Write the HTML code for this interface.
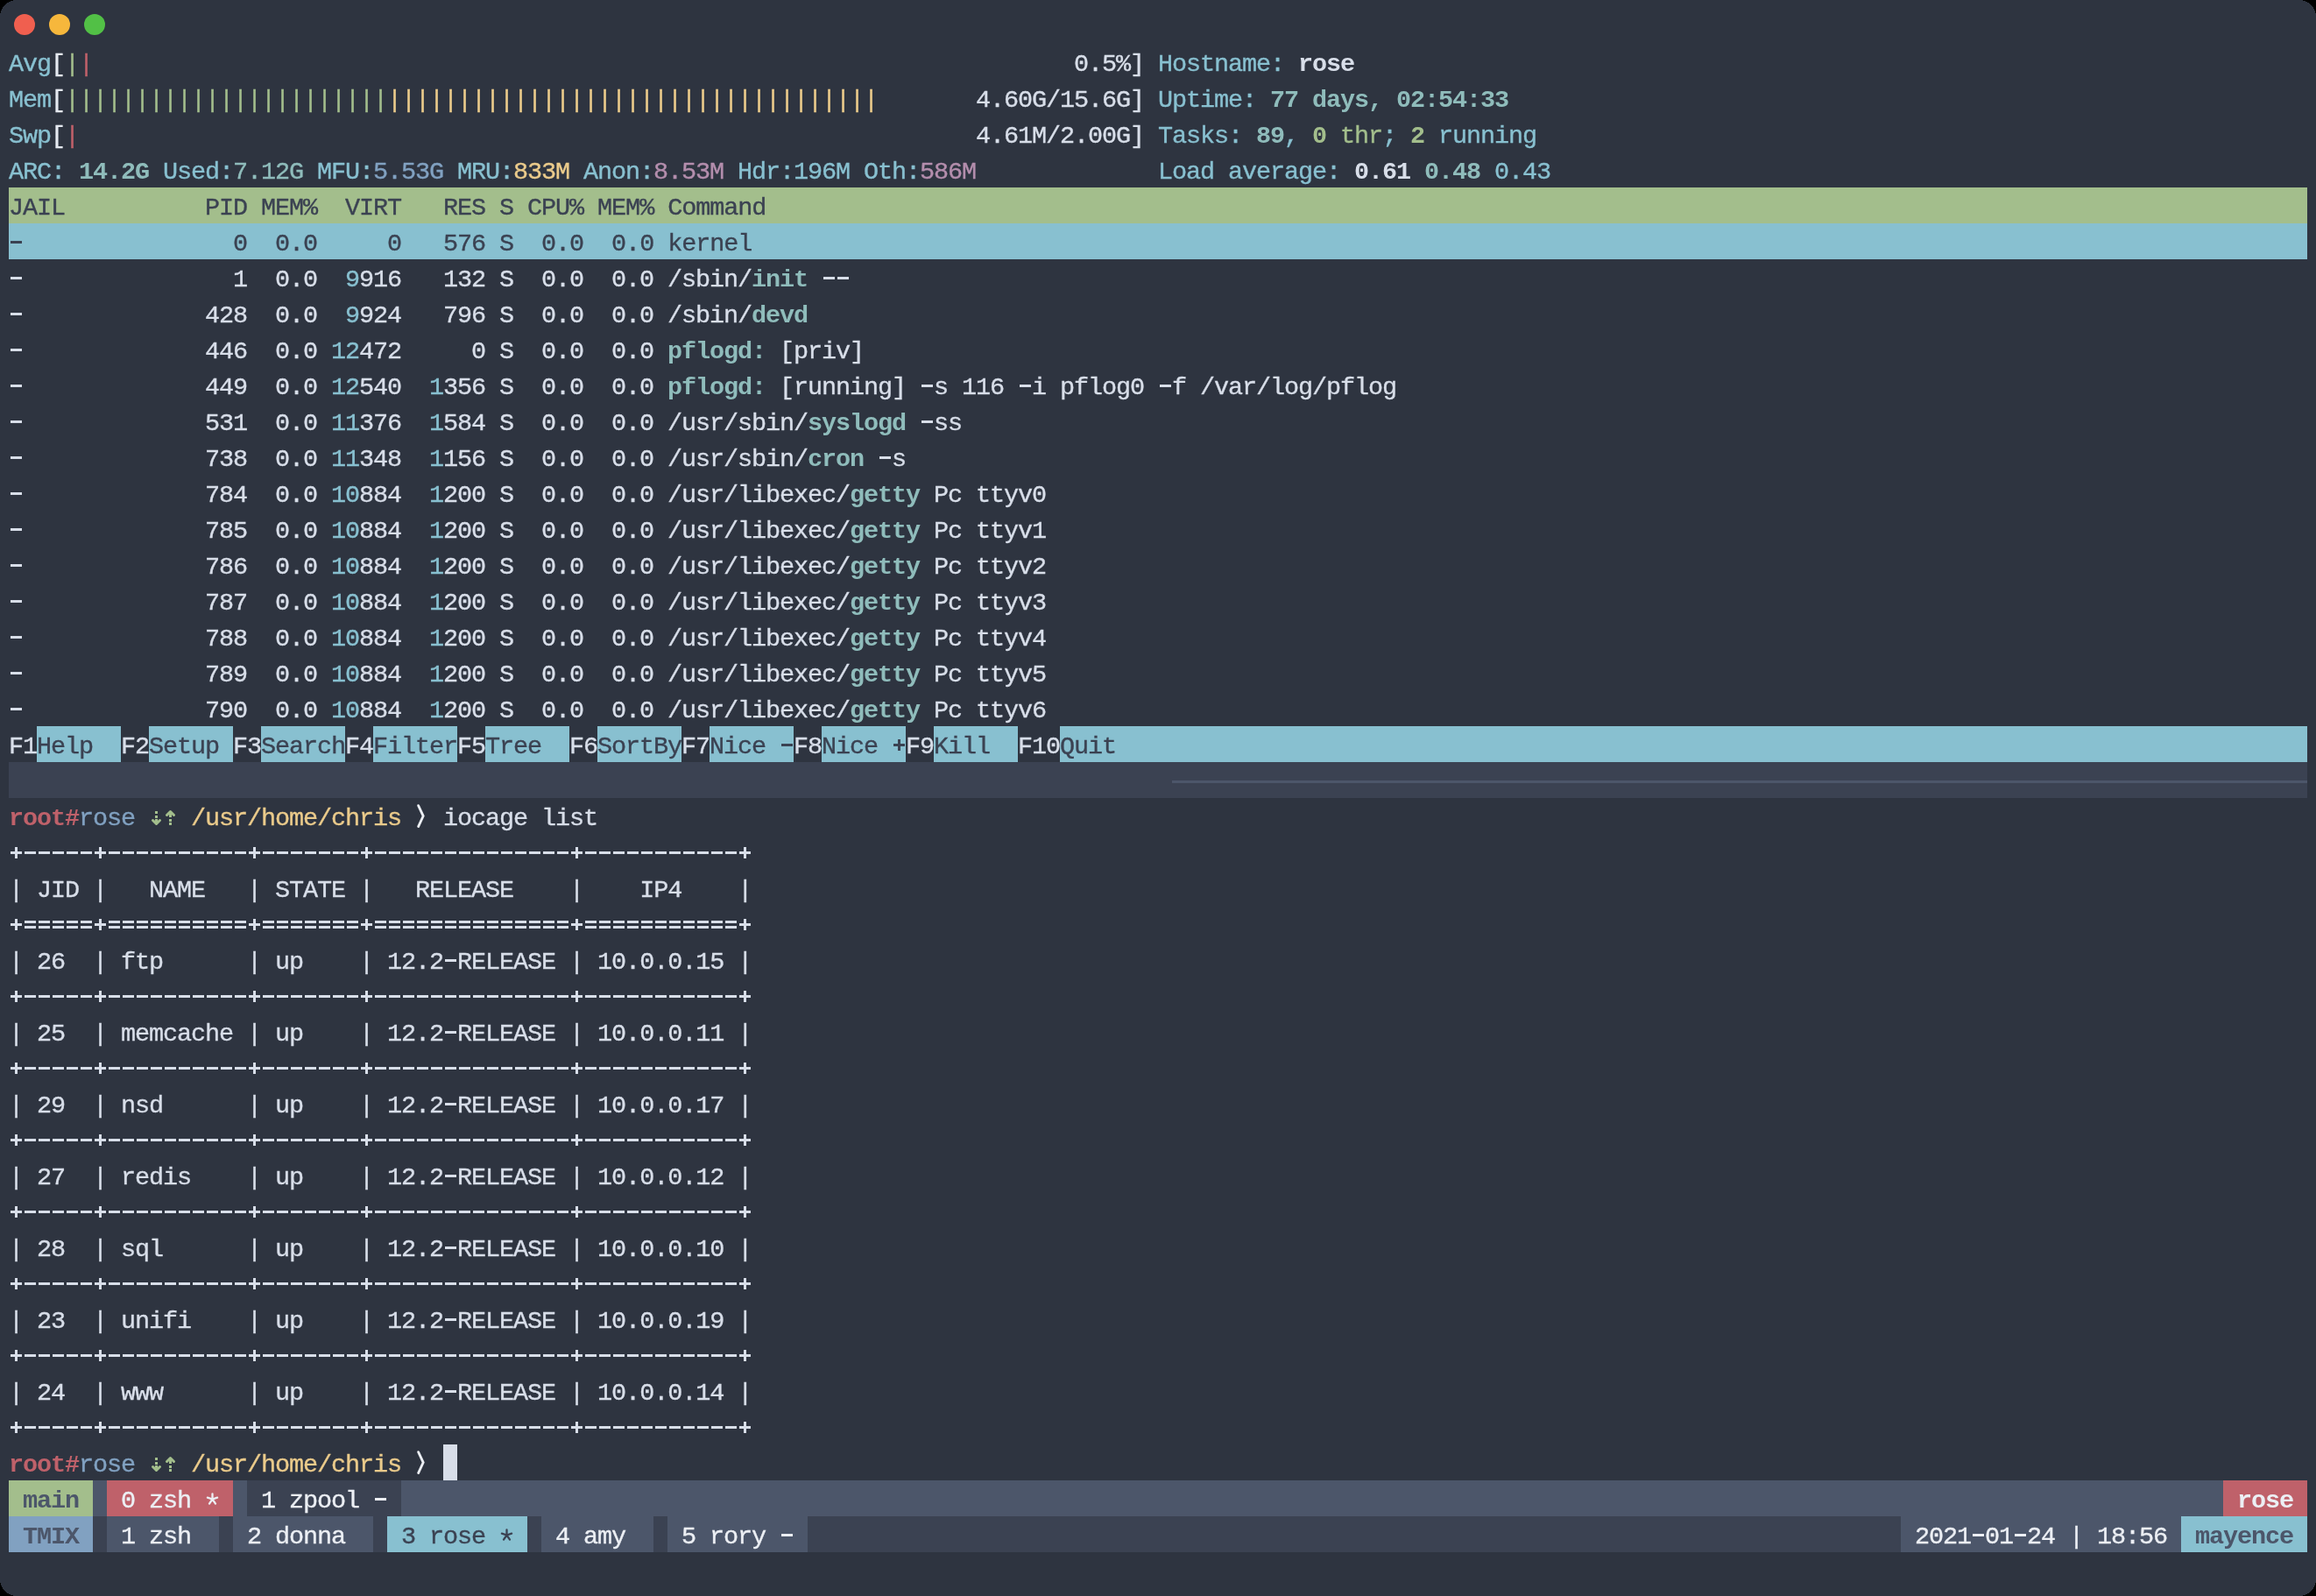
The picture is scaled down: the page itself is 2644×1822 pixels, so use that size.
<!DOCTYPE html>
<html><head><meta charset="utf-8"><style>
html,body{margin:0;padding:0;background:#000;}
body{width:2644px;height:1822px;overflow:hidden;position:relative;}
#win{position:absolute;left:0;top:0;width:2644px;height:1822px;background:#2E3440;overflow:hidden;}
.dot{position:absolute;top:16px;width:24px;height:24px;border-radius:50%;}
.bgr{position:absolute;height:41px;}
.row{will-change:transform;position:absolute;left:10px;height:41px;line-height:41px;white-space:pre;font-family:"Liberation Mono",monospace;font-size:28.5px;letter-spacing:-1.1px;color:#D8DEE9;}
.row span{position:absolute;top:0;-webkit-text-stroke:0.35px currentColor;}
.row i{position:absolute;display:block;}
b{font-weight:bold;}
</style></head><body><div id="win">
<svg style="position:absolute;left:0;top:0;z-index:5" width="2644" height="1822" shape-rendering="crispEdges"><g fill="#000">
<path d="M0 0 H19 A19 19 0 0 0 0 19 Z"/>
<path d="M2644 0 H2625 A19 19 0 0 1 2644 19 Z"/>
<path d="M0 1822 H19 A19 19 0 0 1 0 1803 Z"/>
<path d="M2644 1822 H2625 A19 19 0 0 0 2644 1803 Z"/>
</g></svg>
<div class="dot" style="left:16px;background:#F05F4F"></div>
<div class="dot" style="left:56px;background:#F6B73C"></div>
<div class="dot" style="left:96px;background:#52C046"></div>

<div class="bgr" style="left:10px;top:214px;width:2624px;background:#A3BE8C"></div>
<div class="bgr" style="left:10px;top:255px;width:2624px;background:#88C0D0"></div>
<div class="bgr" style="left:42px;top:829px;width:96px;background:#88C0D0"></div>
<div class="bgr" style="left:170px;top:829px;width:96px;background:#88C0D0"></div>
<div class="bgr" style="left:298px;top:829px;width:96px;background:#88C0D0"></div>
<div class="bgr" style="left:426px;top:829px;width:96px;background:#88C0D0"></div>
<div class="bgr" style="left:554px;top:829px;width:96px;background:#88C0D0"></div>
<div class="bgr" style="left:682px;top:829px;width:96px;background:#88C0D0"></div>
<div class="bgr" style="left:810px;top:829px;width:96px;background:#88C0D0"></div>
<div class="bgr" style="left:938px;top:829px;width:96px;background:#88C0D0"></div>
<div class="bgr" style="left:1066px;top:829px;width:96px;background:#88C0D0"></div>
<div class="bgr" style="left:1210px;top:829px;width:1424px;background:#88C0D0"></div>
<div class="bgr" style="left:10px;top:870px;width:2624px;background:#3B4252"></div>
<div class="bgr" style="left:10px;top:1690px;width:2624px;background:#4C566A"></div>
<div class="bgr" style="left:10px;top:1690px;width:96px;background:#A3BE8C"></div>
<div class="bgr" style="left:122px;top:1690px;width:144px;background:#BF616A"></div>
<div class="bgr" style="left:282px;top:1690px;width:176px;background:#3B4252"></div>
<div class="bgr" style="left:2538px;top:1690px;width:96px;background:#BF616A"></div>
<div class="bgr" style="left:10px;top:1731px;width:2624px;background:#3B4252"></div>
<div class="bgr" style="left:10px;top:1731px;width:96px;background:#81A1C1"></div>
<div class="bgr" style="left:122px;top:1731px;width:128px;background:#4C566A"></div>
<div class="bgr" style="left:266px;top:1731px;width:160px;background:#4C566A"></div>
<div class="bgr" style="left:442px;top:1731px;width:160px;background:#88C0D0"></div>
<div class="bgr" style="left:618px;top:1731px;width:128px;background:#4C566A"></div>
<div class="bgr" style="left:762px;top:1731px;width:160px;background:#4C566A"></div>
<div class="bgr" style="left:2170px;top:1731px;width:320px;background:#4C566A"></div>
<div class="bgr" style="left:2490px;top:1731px;width:144px;background:#88C0D0"></div>
<div style="position:absolute;left:1338px;top:891px;width:1296px;height:3px;background:#4C566A"></div>
<div style="position:absolute;left:506px;top:1649px;width:16px;height:41px;background:#D8DEE9"></div>
<div class="row" style="top:53px">
<span style="left:0px;color:#88C0D0">Avg</span>
<span style="left:48px;color:#E5E9F0">[</span>
<span style="left:64px;color:#A3BE8C">|</span>
<span style="left:80px;color:#BF616A">|</span>
<span style="left:1216px;color:#D8DEE9">0.5%]</span>
<span style="left:1312px;color:#88C0D0">Hostname: </span>
<span style="left:1472px;color:#D8DEE9;font-weight:bold;-webkit-text-stroke:0">rose</span>
</div>
<div class="row" style="top:94px">
<span style="left:0px;color:#88C0D0">Mem</span>
<span style="left:48px;color:#E5E9F0">[</span>
<span style="left:64px;color:#A3BE8C">|||||||||||||||||||||||</span>
<span style="left:432px;color:#EBCB8B">|||||||||||||||||||||||||||||||||||</span>
<span style="left:1104px;color:#D8DEE9">4.60G/15.6G]</span>
<span style="left:1312px;color:#88C0D0">Uptime: </span>
<span style="left:1440px;color:#8FBCBB;font-weight:bold;-webkit-text-stroke:0">77 days, 02:54:33</span>
</div>
<div class="row" style="top:135px">
<span style="left:0px;color:#88C0D0">Swp</span>
<span style="left:48px;color:#E5E9F0">[</span>
<span style="left:64px;color:#BF616A">|</span>
<span style="left:1104px;color:#D8DEE9">4.61M/2.00G]</span>
<span style="left:1312px;color:#88C0D0">Tasks: </span>
<span style="left:1424px;color:#8FBCBB;font-weight:bold;-webkit-text-stroke:0">89</span>
<span style="left:1456px;color:#88C0D0">, </span>
<span style="left:1488px;color:#A3BE8C;font-weight:bold;-webkit-text-stroke:0">0</span>
<span style="left:1504px;color:#A3BE8C"> thr</span>
<span style="left:1568px;color:#88C0D0">; </span>
<span style="left:1600px;color:#A3BE8C;font-weight:bold;-webkit-text-stroke:0">2</span>
<span style="left:1616px;color:#88C0D0"> running</span>
</div>
<div class="row" style="top:176px">
<span style="left:0px;color:#88C0D0">ARC: </span>
<span style="left:80px;color:#8FBCBB;font-weight:bold;-webkit-text-stroke:0">14.2G</span>
<span style="left:160px;color:#88C0D0"> Used:</span>
<span style="left:256px;color:#8FBCBB">7.12G</span>
<span style="left:336px;color:#88C0D0"> MFU:</span>
<span style="left:416px;color:#81A1C1">5.53G</span>
<span style="left:496px;color:#88C0D0"> MRU:</span>
<span style="left:576px;color:#EBCB8B">833M</span>
<span style="left:640px;color:#88C0D0"> Anon:</span>
<span style="left:736px;color:#B48EAD">8.53M</span>
<span style="left:816px;color:#88C0D0"> Hdr:</span>
<span style="left:896px;color:#88C0D0">196M</span>
<span style="left:960px;color:#88C0D0"> Oth:</span>
<span style="left:1040px;color:#B48EAD">586M</span>
<span style="left:1312px;color:#88C0D0">Load average: </span>
<span style="left:1536px;color:#D8DEE9;font-weight:bold;-webkit-text-stroke:0">0.61</span>
<span style="left:1616px;color:#8FBCBB;font-weight:bold;-webkit-text-stroke:0">0.48</span>
<span style="left:1680px;color:#88C0D0"> 0.43</span>
</div>
<div class="row" style="top:217px">
<span style="left:0px;color:#3B4252">JAIL          PID MEM%  VIRT   RES S CPU% MEM% Command</span>
</div>
<div class="row" style="top:258px">
<i style="left:2px;top:17px;width:13px;height:3px;background:#3B4252"></i>
<span style="left:0px;color:#3B4252">                0  0.0     0   576 S  0.0  0.0 kernel</span>
</div>
<div class="row" style="top:299px">
<i style="left:2px;top:17px;width:13px;height:3px;background:#D8DEE9"></i>
<span style="left:0px;color:#D8DEE9">                1  0.0 </span>
<span style="left:384px;color:#88C0D0">9</span>
<span style="left:400px;color:#D8DEE9">916</span>
<span style="left:464px;color:#D8DEE9">  132</span>
<span style="left:544px;color:#D8DEE9"> S  0.0  0.0 </span>
<span style="left:752px;color:#D8DEE9">/sbin/</span>
<span style="left:848px;color:#8FBCBB;font-weight:bold;-webkit-text-stroke:0">init</span>
<i style="left:930px;top:17px;width:13px;height:3px;background:#D8DEE9"></i>
<i style="left:946px;top:17px;width:13px;height:3px;background:#D8DEE9"></i>
</div>
<div class="row" style="top:340px">
<i style="left:2px;top:17px;width:13px;height:3px;background:#D8DEE9"></i>
<span style="left:0px;color:#D8DEE9">              428  0.0 </span>
<span style="left:384px;color:#88C0D0">9</span>
<span style="left:400px;color:#D8DEE9">924</span>
<span style="left:464px;color:#D8DEE9">  796</span>
<span style="left:544px;color:#D8DEE9"> S  0.0  0.0 </span>
<span style="left:752px;color:#D8DEE9">/sbin/</span>
<span style="left:848px;color:#8FBCBB;font-weight:bold;-webkit-text-stroke:0">devd</span>
</div>
<div class="row" style="top:381px">
<i style="left:2px;top:17px;width:13px;height:3px;background:#D8DEE9"></i>
<span style="left:0px;color:#D8DEE9">              446  0.0 </span>
<span style="left:368px;color:#88C0D0">12</span>
<span style="left:400px;color:#D8DEE9">472</span>
<span style="left:464px;color:#D8DEE9">    0</span>
<span style="left:544px;color:#D8DEE9"> S  0.0  0.0 </span>
<span style="left:752px;color:#8FBCBB;font-weight:bold;-webkit-text-stroke:0">pflogd:</span>
<span style="left:864px;color:#D8DEE9"> [priv]</span>
</div>
<div class="row" style="top:422px">
<i style="left:2px;top:17px;width:13px;height:3px;background:#D8DEE9"></i>
<span style="left:0px;color:#D8DEE9">              449  0.0 </span>
<span style="left:368px;color:#88C0D0">12</span>
<span style="left:400px;color:#D8DEE9">540</span>
<span style="left:480px;color:#88C0D0">1</span>
<span style="left:496px;color:#D8DEE9">356</span>
<span style="left:544px;color:#D8DEE9"> S  0.0  0.0 </span>
<span style="left:752px;color:#8FBCBB;font-weight:bold;-webkit-text-stroke:0">pflogd:</span>
<i style="left:1042px;top:17px;width:13px;height:3px;background:#D8DEE9"></i>
<i style="left:1154px;top:17px;width:13px;height:3px;background:#D8DEE9"></i>
<i style="left:1314px;top:17px;width:13px;height:3px;background:#D8DEE9"></i>
<span style="left:864px;color:#D8DEE9"> [running]  s 116  i pflog0  f /var/log/pflog</span>
</div>
<div class="row" style="top:463px">
<i style="left:2px;top:17px;width:13px;height:3px;background:#D8DEE9"></i>
<span style="left:0px;color:#D8DEE9">              531  0.0 </span>
<span style="left:368px;color:#88C0D0">11</span>
<span style="left:400px;color:#D8DEE9">376</span>
<span style="left:480px;color:#88C0D0">1</span>
<span style="left:496px;color:#D8DEE9">584</span>
<span style="left:544px;color:#D8DEE9"> S  0.0  0.0 </span>
<span style="left:752px;color:#D8DEE9">/usr/sbin/</span>
<span style="left:912px;color:#8FBCBB;font-weight:bold;-webkit-text-stroke:0">syslogd</span>
<i style="left:1042px;top:17px;width:13px;height:3px;background:#D8DEE9"></i>
<span style="left:1024px;color:#D8DEE9">  ss</span>
</div>
<div class="row" style="top:504px">
<i style="left:2px;top:17px;width:13px;height:3px;background:#D8DEE9"></i>
<span style="left:0px;color:#D8DEE9">              738  0.0 </span>
<span style="left:368px;color:#88C0D0">11</span>
<span style="left:400px;color:#D8DEE9">348</span>
<span style="left:480px;color:#88C0D0">1</span>
<span style="left:496px;color:#D8DEE9">156</span>
<span style="left:544px;color:#D8DEE9"> S  0.0  0.0 </span>
<span style="left:752px;color:#D8DEE9">/usr/sbin/</span>
<span style="left:912px;color:#8FBCBB;font-weight:bold;-webkit-text-stroke:0">cron</span>
<i style="left:994px;top:17px;width:13px;height:3px;background:#D8DEE9"></i>
<span style="left:976px;color:#D8DEE9">  s</span>
</div>
<div class="row" style="top:545px">
<i style="left:2px;top:17px;width:13px;height:3px;background:#D8DEE9"></i>
<span style="left:0px;color:#D8DEE9">              784  0.0 </span>
<span style="left:368px;color:#88C0D0">10</span>
<span style="left:400px;color:#D8DEE9">884</span>
<span style="left:480px;color:#88C0D0">1</span>
<span style="left:496px;color:#D8DEE9">200</span>
<span style="left:544px;color:#D8DEE9"> S  0.0  0.0 </span>
<span style="left:752px;color:#D8DEE9">/usr/libexec/</span>
<span style="left:960px;color:#8FBCBB;font-weight:bold;-webkit-text-stroke:0">getty</span>
<span style="left:1040px;color:#D8DEE9"> Pc ttyv0</span>
</div>
<div class="row" style="top:586px">
<i style="left:2px;top:17px;width:13px;height:3px;background:#D8DEE9"></i>
<span style="left:0px;color:#D8DEE9">              785  0.0 </span>
<span style="left:368px;color:#88C0D0">10</span>
<span style="left:400px;color:#D8DEE9">884</span>
<span style="left:480px;color:#88C0D0">1</span>
<span style="left:496px;color:#D8DEE9">200</span>
<span style="left:544px;color:#D8DEE9"> S  0.0  0.0 </span>
<span style="left:752px;color:#D8DEE9">/usr/libexec/</span>
<span style="left:960px;color:#8FBCBB;font-weight:bold;-webkit-text-stroke:0">getty</span>
<span style="left:1040px;color:#D8DEE9"> Pc ttyv1</span>
</div>
<div class="row" style="top:627px">
<i style="left:2px;top:17px;width:13px;height:3px;background:#D8DEE9"></i>
<span style="left:0px;color:#D8DEE9">              786  0.0 </span>
<span style="left:368px;color:#88C0D0">10</span>
<span style="left:400px;color:#D8DEE9">884</span>
<span style="left:480px;color:#88C0D0">1</span>
<span style="left:496px;color:#D8DEE9">200</span>
<span style="left:544px;color:#D8DEE9"> S  0.0  0.0 </span>
<span style="left:752px;color:#D8DEE9">/usr/libexec/</span>
<span style="left:960px;color:#8FBCBB;font-weight:bold;-webkit-text-stroke:0">getty</span>
<span style="left:1040px;color:#D8DEE9"> Pc ttyv2</span>
</div>
<div class="row" style="top:668px">
<i style="left:2px;top:17px;width:13px;height:3px;background:#D8DEE9"></i>
<span style="left:0px;color:#D8DEE9">              787  0.0 </span>
<span style="left:368px;color:#88C0D0">10</span>
<span style="left:400px;color:#D8DEE9">884</span>
<span style="left:480px;color:#88C0D0">1</span>
<span style="left:496px;color:#D8DEE9">200</span>
<span style="left:544px;color:#D8DEE9"> S  0.0  0.0 </span>
<span style="left:752px;color:#D8DEE9">/usr/libexec/</span>
<span style="left:960px;color:#8FBCBB;font-weight:bold;-webkit-text-stroke:0">getty</span>
<span style="left:1040px;color:#D8DEE9"> Pc ttyv3</span>
</div>
<div class="row" style="top:709px">
<i style="left:2px;top:17px;width:13px;height:3px;background:#D8DEE9"></i>
<span style="left:0px;color:#D8DEE9">              788  0.0 </span>
<span style="left:368px;color:#88C0D0">10</span>
<span style="left:400px;color:#D8DEE9">884</span>
<span style="left:480px;color:#88C0D0">1</span>
<span style="left:496px;color:#D8DEE9">200</span>
<span style="left:544px;color:#D8DEE9"> S  0.0  0.0 </span>
<span style="left:752px;color:#D8DEE9">/usr/libexec/</span>
<span style="left:960px;color:#8FBCBB;font-weight:bold;-webkit-text-stroke:0">getty</span>
<span style="left:1040px;color:#D8DEE9"> Pc ttyv4</span>
</div>
<div class="row" style="top:750px">
<i style="left:2px;top:17px;width:13px;height:3px;background:#D8DEE9"></i>
<span style="left:0px;color:#D8DEE9">              789  0.0 </span>
<span style="left:368px;color:#88C0D0">10</span>
<span style="left:400px;color:#D8DEE9">884</span>
<span style="left:480px;color:#88C0D0">1</span>
<span style="left:496px;color:#D8DEE9">200</span>
<span style="left:544px;color:#D8DEE9"> S  0.0  0.0 </span>
<span style="left:752px;color:#D8DEE9">/usr/libexec/</span>
<span style="left:960px;color:#8FBCBB;font-weight:bold;-webkit-text-stroke:0">getty</span>
<span style="left:1040px;color:#D8DEE9"> Pc ttyv5</span>
</div>
<div class="row" style="top:791px">
<i style="left:2px;top:17px;width:13px;height:3px;background:#D8DEE9"></i>
<span style="left:0px;color:#D8DEE9">              790  0.0 </span>
<span style="left:368px;color:#88C0D0">10</span>
<span style="left:400px;color:#D8DEE9">884</span>
<span style="left:480px;color:#88C0D0">1</span>
<span style="left:496px;color:#D8DEE9">200</span>
<span style="left:544px;color:#D8DEE9"> S  0.0  0.0 </span>
<span style="left:752px;color:#D8DEE9">/usr/libexec/</span>
<span style="left:960px;color:#8FBCBB;font-weight:bold;-webkit-text-stroke:0">getty</span>
<span style="left:1040px;color:#D8DEE9"> Pc ttyv6</span>
</div>
<div class="row" style="top:832px">
<span style="left:0px;color:#D8DEE9">F1</span>
<span style="left:32px;color:#3B4252">Help  </span>
<span style="left:128px;color:#D8DEE9">F2</span>
<span style="left:160px;color:#3B4252">Setup </span>
<span style="left:256px;color:#D8DEE9">F3</span>
<span style="left:288px;color:#3B4252">Search</span>
<span style="left:384px;color:#D8DEE9">F4</span>
<span style="left:416px;color:#3B4252">Filter</span>
<span style="left:512px;color:#D8DEE9">F5</span>
<span style="left:544px;color:#3B4252">Tree  </span>
<span style="left:640px;color:#D8DEE9">F6</span>
<span style="left:672px;color:#3B4252">SortBy</span>
<span style="left:768px;color:#D8DEE9">F7</span>
<i style="left:882px;top:17px;width:13px;height:3px;background:#3B4252"></i>
<span style="left:800px;color:#3B4252">Nice  </span>
<span style="left:896px;color:#D8DEE9">F8</span>
<i style="left:1010px;top:17px;width:13px;height:3px;background:#3B4252"></i>
<i style="left:1015px;top:12px;width:3px;height:13px;background:#3B4252"></i>
<span style="left:928px;color:#3B4252">Nice  </span>
<span style="left:1024px;color:#D8DEE9">F9</span>
<span style="left:1056px;color:#3B4252">Kill  </span>
<span style="left:1152px;color:#D8DEE9">F10</span>
<span style="left:1200px;color:#3B4252">Quit</span>
</div>
<div class="row" style="top:914px">
<span style="left:0px;color:#BF616A;font-weight:bold;-webkit-text-stroke:0">root#</span>
<span style="left:80px;color:#81A1C1">rose</span>
<span style="left:160px;top:-3px;width:32px;height:41px"><svg width="32" height="41" style="position:absolute;top:0;left:0" viewBox="0 0 32 41"><g fill="#A3BE8C"><rect x="7" y="15" width="3" height="3"/><rect x="7" y="20" width="3" height="3"/><rect x="7" y="24" width="3" height="5"/><rect x="23" y="17" width="3" height="5"/><rect x="23" y="24" width="3" height="3"/><rect x="23" y="28" width="3" height="3"/></g><g stroke="#A3BE8C" stroke-width="3" fill="none" stroke-linecap="round" stroke-linejoin="round"><path d="M4.5 25.5 L8.5 29.5 L12.5 25.5"/><path d="M20.5 19.5 L24.5 15.5 L28.5 19.5"/></g></svg></span>
<span style="left:208px;color:#EBCB8B">/usr/home/chris</span>
<span style="left:464px;top:-3px;width:16px;height:41px"><svg width="16" height="41" style="position:absolute;top:0;left:0" viewBox="0 0 16 41"><path d="M3.6 8.6 L9.2 20.6 L3.6 32.6" stroke="#ECEFF4" stroke-width="2.8" fill="none" stroke-linecap="round" stroke-linejoin="miter"/></svg></span>
<span style="left:496px;color:#D8DEE9">iocage list</span>
</div>
<div class="row" style="top:955px">
<i style="left:2px;top:17px;width:13px;height:3px;background:#D8DEE9"></i>
<i style="left:7px;top:12px;width:3px;height:13px;background:#D8DEE9"></i>
<i style="left:18px;top:17px;width:13px;height:3px;background:#D8DEE9"></i>
<i style="left:34px;top:17px;width:13px;height:3px;background:#D8DEE9"></i>
<i style="left:50px;top:17px;width:13px;height:3px;background:#D8DEE9"></i>
<i style="left:66px;top:17px;width:13px;height:3px;background:#D8DEE9"></i>
<i style="left:82px;top:17px;width:13px;height:3px;background:#D8DEE9"></i>
<i style="left:98px;top:17px;width:13px;height:3px;background:#D8DEE9"></i>
<i style="left:103px;top:12px;width:3px;height:13px;background:#D8DEE9"></i>
<i style="left:114px;top:17px;width:13px;height:3px;background:#D8DEE9"></i>
<i style="left:130px;top:17px;width:13px;height:3px;background:#D8DEE9"></i>
<i style="left:146px;top:17px;width:13px;height:3px;background:#D8DEE9"></i>
<i style="left:162px;top:17px;width:13px;height:3px;background:#D8DEE9"></i>
<i style="left:178px;top:17px;width:13px;height:3px;background:#D8DEE9"></i>
<i style="left:194px;top:17px;width:13px;height:3px;background:#D8DEE9"></i>
<i style="left:210px;top:17px;width:13px;height:3px;background:#D8DEE9"></i>
<i style="left:226px;top:17px;width:13px;height:3px;background:#D8DEE9"></i>
<i style="left:242px;top:17px;width:13px;height:3px;background:#D8DEE9"></i>
<i style="left:258px;top:17px;width:13px;height:3px;background:#D8DEE9"></i>
<i style="left:274px;top:17px;width:13px;height:3px;background:#D8DEE9"></i>
<i style="left:279px;top:12px;width:3px;height:13px;background:#D8DEE9"></i>
<i style="left:290px;top:17px;width:13px;height:3px;background:#D8DEE9"></i>
<i style="left:306px;top:17px;width:13px;height:3px;background:#D8DEE9"></i>
<i style="left:322px;top:17px;width:13px;height:3px;background:#D8DEE9"></i>
<i style="left:338px;top:17px;width:13px;height:3px;background:#D8DEE9"></i>
<i style="left:354px;top:17px;width:13px;height:3px;background:#D8DEE9"></i>
<i style="left:370px;top:17px;width:13px;height:3px;background:#D8DEE9"></i>
<i style="left:386px;top:17px;width:13px;height:3px;background:#D8DEE9"></i>
<i style="left:402px;top:17px;width:13px;height:3px;background:#D8DEE9"></i>
<i style="left:407px;top:12px;width:3px;height:13px;background:#D8DEE9"></i>
<i style="left:418px;top:17px;width:13px;height:3px;background:#D8DEE9"></i>
<i style="left:434px;top:17px;width:13px;height:3px;background:#D8DEE9"></i>
<i style="left:450px;top:17px;width:13px;height:3px;background:#D8DEE9"></i>
<i style="left:466px;top:17px;width:13px;height:3px;background:#D8DEE9"></i>
<i style="left:482px;top:17px;width:13px;height:3px;background:#D8DEE9"></i>
<i style="left:498px;top:17px;width:13px;height:3px;background:#D8DEE9"></i>
<i style="left:514px;top:17px;width:13px;height:3px;background:#D8DEE9"></i>
<i style="left:530px;top:17px;width:13px;height:3px;background:#D8DEE9"></i>
<i style="left:546px;top:17px;width:13px;height:3px;background:#D8DEE9"></i>
<i style="left:562px;top:17px;width:13px;height:3px;background:#D8DEE9"></i>
<i style="left:578px;top:17px;width:13px;height:3px;background:#D8DEE9"></i>
<i style="left:594px;top:17px;width:13px;height:3px;background:#D8DEE9"></i>
<i style="left:610px;top:17px;width:13px;height:3px;background:#D8DEE9"></i>
<i style="left:626px;top:17px;width:13px;height:3px;background:#D8DEE9"></i>
<i style="left:642px;top:17px;width:13px;height:3px;background:#D8DEE9"></i>
<i style="left:647px;top:12px;width:3px;height:13px;background:#D8DEE9"></i>
<i style="left:658px;top:17px;width:13px;height:3px;background:#D8DEE9"></i>
<i style="left:674px;top:17px;width:13px;height:3px;background:#D8DEE9"></i>
<i style="left:690px;top:17px;width:13px;height:3px;background:#D8DEE9"></i>
<i style="left:706px;top:17px;width:13px;height:3px;background:#D8DEE9"></i>
<i style="left:722px;top:17px;width:13px;height:3px;background:#D8DEE9"></i>
<i style="left:738px;top:17px;width:13px;height:3px;background:#D8DEE9"></i>
<i style="left:754px;top:17px;width:13px;height:3px;background:#D8DEE9"></i>
<i style="left:770px;top:17px;width:13px;height:3px;background:#D8DEE9"></i>
<i style="left:786px;top:17px;width:13px;height:3px;background:#D8DEE9"></i>
<i style="left:802px;top:17px;width:13px;height:3px;background:#D8DEE9"></i>
<i style="left:818px;top:17px;width:13px;height:3px;background:#D8DEE9"></i>
<i style="left:834px;top:17px;width:13px;height:3px;background:#D8DEE9"></i>
<i style="left:839px;top:12px;width:3px;height:13px;background:#D8DEE9"></i>
</div>
<div class="row" style="top:996px">
<span style="left:0px;color:#D8DEE9">| JID |   NAME   | STATE |   RELEASE    |    IP4    |</span>
</div>
<div class="row" style="top:1037px">
<i style="left:2px;top:17px;width:13px;height:3px;background:#D8DEE9"></i>
<i style="left:7px;top:12px;width:3px;height:13px;background:#D8DEE9"></i>
<i style="left:18px;top:14px;width:13px;height:3px;background:#D8DEE9"></i>
<i style="left:18px;top:20px;width:13px;height:3px;background:#D8DEE9"></i>
<i style="left:34px;top:14px;width:13px;height:3px;background:#D8DEE9"></i>
<i style="left:34px;top:20px;width:13px;height:3px;background:#D8DEE9"></i>
<i style="left:50px;top:14px;width:13px;height:3px;background:#D8DEE9"></i>
<i style="left:50px;top:20px;width:13px;height:3px;background:#D8DEE9"></i>
<i style="left:66px;top:14px;width:13px;height:3px;background:#D8DEE9"></i>
<i style="left:66px;top:20px;width:13px;height:3px;background:#D8DEE9"></i>
<i style="left:82px;top:14px;width:13px;height:3px;background:#D8DEE9"></i>
<i style="left:82px;top:20px;width:13px;height:3px;background:#D8DEE9"></i>
<i style="left:98px;top:17px;width:13px;height:3px;background:#D8DEE9"></i>
<i style="left:103px;top:12px;width:3px;height:13px;background:#D8DEE9"></i>
<i style="left:114px;top:14px;width:13px;height:3px;background:#D8DEE9"></i>
<i style="left:114px;top:20px;width:13px;height:3px;background:#D8DEE9"></i>
<i style="left:130px;top:14px;width:13px;height:3px;background:#D8DEE9"></i>
<i style="left:130px;top:20px;width:13px;height:3px;background:#D8DEE9"></i>
<i style="left:146px;top:14px;width:13px;height:3px;background:#D8DEE9"></i>
<i style="left:146px;top:20px;width:13px;height:3px;background:#D8DEE9"></i>
<i style="left:162px;top:14px;width:13px;height:3px;background:#D8DEE9"></i>
<i style="left:162px;top:20px;width:13px;height:3px;background:#D8DEE9"></i>
<i style="left:178px;top:14px;width:13px;height:3px;background:#D8DEE9"></i>
<i style="left:178px;top:20px;width:13px;height:3px;background:#D8DEE9"></i>
<i style="left:194px;top:14px;width:13px;height:3px;background:#D8DEE9"></i>
<i style="left:194px;top:20px;width:13px;height:3px;background:#D8DEE9"></i>
<i style="left:210px;top:14px;width:13px;height:3px;background:#D8DEE9"></i>
<i style="left:210px;top:20px;width:13px;height:3px;background:#D8DEE9"></i>
<i style="left:226px;top:14px;width:13px;height:3px;background:#D8DEE9"></i>
<i style="left:226px;top:20px;width:13px;height:3px;background:#D8DEE9"></i>
<i style="left:242px;top:14px;width:13px;height:3px;background:#D8DEE9"></i>
<i style="left:242px;top:20px;width:13px;height:3px;background:#D8DEE9"></i>
<i style="left:258px;top:14px;width:13px;height:3px;background:#D8DEE9"></i>
<i style="left:258px;top:20px;width:13px;height:3px;background:#D8DEE9"></i>
<i style="left:274px;top:17px;width:13px;height:3px;background:#D8DEE9"></i>
<i style="left:279px;top:12px;width:3px;height:13px;background:#D8DEE9"></i>
<i style="left:290px;top:14px;width:13px;height:3px;background:#D8DEE9"></i>
<i style="left:290px;top:20px;width:13px;height:3px;background:#D8DEE9"></i>
<i style="left:306px;top:14px;width:13px;height:3px;background:#D8DEE9"></i>
<i style="left:306px;top:20px;width:13px;height:3px;background:#D8DEE9"></i>
<i style="left:322px;top:14px;width:13px;height:3px;background:#D8DEE9"></i>
<i style="left:322px;top:20px;width:13px;height:3px;background:#D8DEE9"></i>
<i style="left:338px;top:14px;width:13px;height:3px;background:#D8DEE9"></i>
<i style="left:338px;top:20px;width:13px;height:3px;background:#D8DEE9"></i>
<i style="left:354px;top:14px;width:13px;height:3px;background:#D8DEE9"></i>
<i style="left:354px;top:20px;width:13px;height:3px;background:#D8DEE9"></i>
<i style="left:370px;top:14px;width:13px;height:3px;background:#D8DEE9"></i>
<i style="left:370px;top:20px;width:13px;height:3px;background:#D8DEE9"></i>
<i style="left:386px;top:14px;width:13px;height:3px;background:#D8DEE9"></i>
<i style="left:386px;top:20px;width:13px;height:3px;background:#D8DEE9"></i>
<i style="left:402px;top:17px;width:13px;height:3px;background:#D8DEE9"></i>
<i style="left:407px;top:12px;width:3px;height:13px;background:#D8DEE9"></i>
<i style="left:418px;top:14px;width:13px;height:3px;background:#D8DEE9"></i>
<i style="left:418px;top:20px;width:13px;height:3px;background:#D8DEE9"></i>
<i style="left:434px;top:14px;width:13px;height:3px;background:#D8DEE9"></i>
<i style="left:434px;top:20px;width:13px;height:3px;background:#D8DEE9"></i>
<i style="left:450px;top:14px;width:13px;height:3px;background:#D8DEE9"></i>
<i style="left:450px;top:20px;width:13px;height:3px;background:#D8DEE9"></i>
<i style="left:466px;top:14px;width:13px;height:3px;background:#D8DEE9"></i>
<i style="left:466px;top:20px;width:13px;height:3px;background:#D8DEE9"></i>
<i style="left:482px;top:14px;width:13px;height:3px;background:#D8DEE9"></i>
<i style="left:482px;top:20px;width:13px;height:3px;background:#D8DEE9"></i>
<i style="left:498px;top:14px;width:13px;height:3px;background:#D8DEE9"></i>
<i style="left:498px;top:20px;width:13px;height:3px;background:#D8DEE9"></i>
<i style="left:514px;top:14px;width:13px;height:3px;background:#D8DEE9"></i>
<i style="left:514px;top:20px;width:13px;height:3px;background:#D8DEE9"></i>
<i style="left:530px;top:14px;width:13px;height:3px;background:#D8DEE9"></i>
<i style="left:530px;top:20px;width:13px;height:3px;background:#D8DEE9"></i>
<i style="left:546px;top:14px;width:13px;height:3px;background:#D8DEE9"></i>
<i style="left:546px;top:20px;width:13px;height:3px;background:#D8DEE9"></i>
<i style="left:562px;top:14px;width:13px;height:3px;background:#D8DEE9"></i>
<i style="left:562px;top:20px;width:13px;height:3px;background:#D8DEE9"></i>
<i style="left:578px;top:14px;width:13px;height:3px;background:#D8DEE9"></i>
<i style="left:578px;top:20px;width:13px;height:3px;background:#D8DEE9"></i>
<i style="left:594px;top:14px;width:13px;height:3px;background:#D8DEE9"></i>
<i style="left:594px;top:20px;width:13px;height:3px;background:#D8DEE9"></i>
<i style="left:610px;top:14px;width:13px;height:3px;background:#D8DEE9"></i>
<i style="left:610px;top:20px;width:13px;height:3px;background:#D8DEE9"></i>
<i style="left:626px;top:14px;width:13px;height:3px;background:#D8DEE9"></i>
<i style="left:626px;top:20px;width:13px;height:3px;background:#D8DEE9"></i>
<i style="left:642px;top:17px;width:13px;height:3px;background:#D8DEE9"></i>
<i style="left:647px;top:12px;width:3px;height:13px;background:#D8DEE9"></i>
<i style="left:658px;top:14px;width:13px;height:3px;background:#D8DEE9"></i>
<i style="left:658px;top:20px;width:13px;height:3px;background:#D8DEE9"></i>
<i style="left:674px;top:14px;width:13px;height:3px;background:#D8DEE9"></i>
<i style="left:674px;top:20px;width:13px;height:3px;background:#D8DEE9"></i>
<i style="left:690px;top:14px;width:13px;height:3px;background:#D8DEE9"></i>
<i style="left:690px;top:20px;width:13px;height:3px;background:#D8DEE9"></i>
<i style="left:706px;top:14px;width:13px;height:3px;background:#D8DEE9"></i>
<i style="left:706px;top:20px;width:13px;height:3px;background:#D8DEE9"></i>
<i style="left:722px;top:14px;width:13px;height:3px;background:#D8DEE9"></i>
<i style="left:722px;top:20px;width:13px;height:3px;background:#D8DEE9"></i>
<i style="left:738px;top:14px;width:13px;height:3px;background:#D8DEE9"></i>
<i style="left:738px;top:20px;width:13px;height:3px;background:#D8DEE9"></i>
<i style="left:754px;top:14px;width:13px;height:3px;background:#D8DEE9"></i>
<i style="left:754px;top:20px;width:13px;height:3px;background:#D8DEE9"></i>
<i style="left:770px;top:14px;width:13px;height:3px;background:#D8DEE9"></i>
<i style="left:770px;top:20px;width:13px;height:3px;background:#D8DEE9"></i>
<i style="left:786px;top:14px;width:13px;height:3px;background:#D8DEE9"></i>
<i style="left:786px;top:20px;width:13px;height:3px;background:#D8DEE9"></i>
<i style="left:802px;top:14px;width:13px;height:3px;background:#D8DEE9"></i>
<i style="left:802px;top:20px;width:13px;height:3px;background:#D8DEE9"></i>
<i style="left:818px;top:14px;width:13px;height:3px;background:#D8DEE9"></i>
<i style="left:818px;top:20px;width:13px;height:3px;background:#D8DEE9"></i>
<i style="left:834px;top:17px;width:13px;height:3px;background:#D8DEE9"></i>
<i style="left:839px;top:12px;width:3px;height:13px;background:#D8DEE9"></i>
</div>
<div class="row" style="top:1078px">
<i style="left:498px;top:17px;width:13px;height:3px;background:#D8DEE9"></i>
<span style="left:0px;color:#D8DEE9">| 26  | ftp      | up    | 12.2 RELEASE | 10.0.0.15 |</span>
</div>
<div class="row" style="top:1119px">
<i style="left:2px;top:17px;width:13px;height:3px;background:#D8DEE9"></i>
<i style="left:7px;top:12px;width:3px;height:13px;background:#D8DEE9"></i>
<i style="left:18px;top:17px;width:13px;height:3px;background:#D8DEE9"></i>
<i style="left:34px;top:17px;width:13px;height:3px;background:#D8DEE9"></i>
<i style="left:50px;top:17px;width:13px;height:3px;background:#D8DEE9"></i>
<i style="left:66px;top:17px;width:13px;height:3px;background:#D8DEE9"></i>
<i style="left:82px;top:17px;width:13px;height:3px;background:#D8DEE9"></i>
<i style="left:98px;top:17px;width:13px;height:3px;background:#D8DEE9"></i>
<i style="left:103px;top:12px;width:3px;height:13px;background:#D8DEE9"></i>
<i style="left:114px;top:17px;width:13px;height:3px;background:#D8DEE9"></i>
<i style="left:130px;top:17px;width:13px;height:3px;background:#D8DEE9"></i>
<i style="left:146px;top:17px;width:13px;height:3px;background:#D8DEE9"></i>
<i style="left:162px;top:17px;width:13px;height:3px;background:#D8DEE9"></i>
<i style="left:178px;top:17px;width:13px;height:3px;background:#D8DEE9"></i>
<i style="left:194px;top:17px;width:13px;height:3px;background:#D8DEE9"></i>
<i style="left:210px;top:17px;width:13px;height:3px;background:#D8DEE9"></i>
<i style="left:226px;top:17px;width:13px;height:3px;background:#D8DEE9"></i>
<i style="left:242px;top:17px;width:13px;height:3px;background:#D8DEE9"></i>
<i style="left:258px;top:17px;width:13px;height:3px;background:#D8DEE9"></i>
<i style="left:274px;top:17px;width:13px;height:3px;background:#D8DEE9"></i>
<i style="left:279px;top:12px;width:3px;height:13px;background:#D8DEE9"></i>
<i style="left:290px;top:17px;width:13px;height:3px;background:#D8DEE9"></i>
<i style="left:306px;top:17px;width:13px;height:3px;background:#D8DEE9"></i>
<i style="left:322px;top:17px;width:13px;height:3px;background:#D8DEE9"></i>
<i style="left:338px;top:17px;width:13px;height:3px;background:#D8DEE9"></i>
<i style="left:354px;top:17px;width:13px;height:3px;background:#D8DEE9"></i>
<i style="left:370px;top:17px;width:13px;height:3px;background:#D8DEE9"></i>
<i style="left:386px;top:17px;width:13px;height:3px;background:#D8DEE9"></i>
<i style="left:402px;top:17px;width:13px;height:3px;background:#D8DEE9"></i>
<i style="left:407px;top:12px;width:3px;height:13px;background:#D8DEE9"></i>
<i style="left:418px;top:17px;width:13px;height:3px;background:#D8DEE9"></i>
<i style="left:434px;top:17px;width:13px;height:3px;background:#D8DEE9"></i>
<i style="left:450px;top:17px;width:13px;height:3px;background:#D8DEE9"></i>
<i style="left:466px;top:17px;width:13px;height:3px;background:#D8DEE9"></i>
<i style="left:482px;top:17px;width:13px;height:3px;background:#D8DEE9"></i>
<i style="left:498px;top:17px;width:13px;height:3px;background:#D8DEE9"></i>
<i style="left:514px;top:17px;width:13px;height:3px;background:#D8DEE9"></i>
<i style="left:530px;top:17px;width:13px;height:3px;background:#D8DEE9"></i>
<i style="left:546px;top:17px;width:13px;height:3px;background:#D8DEE9"></i>
<i style="left:562px;top:17px;width:13px;height:3px;background:#D8DEE9"></i>
<i style="left:578px;top:17px;width:13px;height:3px;background:#D8DEE9"></i>
<i style="left:594px;top:17px;width:13px;height:3px;background:#D8DEE9"></i>
<i style="left:610px;top:17px;width:13px;height:3px;background:#D8DEE9"></i>
<i style="left:626px;top:17px;width:13px;height:3px;background:#D8DEE9"></i>
<i style="left:642px;top:17px;width:13px;height:3px;background:#D8DEE9"></i>
<i style="left:647px;top:12px;width:3px;height:13px;background:#D8DEE9"></i>
<i style="left:658px;top:17px;width:13px;height:3px;background:#D8DEE9"></i>
<i style="left:674px;top:17px;width:13px;height:3px;background:#D8DEE9"></i>
<i style="left:690px;top:17px;width:13px;height:3px;background:#D8DEE9"></i>
<i style="left:706px;top:17px;width:13px;height:3px;background:#D8DEE9"></i>
<i style="left:722px;top:17px;width:13px;height:3px;background:#D8DEE9"></i>
<i style="left:738px;top:17px;width:13px;height:3px;background:#D8DEE9"></i>
<i style="left:754px;top:17px;width:13px;height:3px;background:#D8DEE9"></i>
<i style="left:770px;top:17px;width:13px;height:3px;background:#D8DEE9"></i>
<i style="left:786px;top:17px;width:13px;height:3px;background:#D8DEE9"></i>
<i style="left:802px;top:17px;width:13px;height:3px;background:#D8DEE9"></i>
<i style="left:818px;top:17px;width:13px;height:3px;background:#D8DEE9"></i>
<i style="left:834px;top:17px;width:13px;height:3px;background:#D8DEE9"></i>
<i style="left:839px;top:12px;width:3px;height:13px;background:#D8DEE9"></i>
</div>
<div class="row" style="top:1160px">
<i style="left:498px;top:17px;width:13px;height:3px;background:#D8DEE9"></i>
<span style="left:0px;color:#D8DEE9">| 25  | memcache | up    | 12.2 RELEASE | 10.0.0.11 |</span>
</div>
<div class="row" style="top:1201px">
<i style="left:2px;top:17px;width:13px;height:3px;background:#D8DEE9"></i>
<i style="left:7px;top:12px;width:3px;height:13px;background:#D8DEE9"></i>
<i style="left:18px;top:17px;width:13px;height:3px;background:#D8DEE9"></i>
<i style="left:34px;top:17px;width:13px;height:3px;background:#D8DEE9"></i>
<i style="left:50px;top:17px;width:13px;height:3px;background:#D8DEE9"></i>
<i style="left:66px;top:17px;width:13px;height:3px;background:#D8DEE9"></i>
<i style="left:82px;top:17px;width:13px;height:3px;background:#D8DEE9"></i>
<i style="left:98px;top:17px;width:13px;height:3px;background:#D8DEE9"></i>
<i style="left:103px;top:12px;width:3px;height:13px;background:#D8DEE9"></i>
<i style="left:114px;top:17px;width:13px;height:3px;background:#D8DEE9"></i>
<i style="left:130px;top:17px;width:13px;height:3px;background:#D8DEE9"></i>
<i style="left:146px;top:17px;width:13px;height:3px;background:#D8DEE9"></i>
<i style="left:162px;top:17px;width:13px;height:3px;background:#D8DEE9"></i>
<i style="left:178px;top:17px;width:13px;height:3px;background:#D8DEE9"></i>
<i style="left:194px;top:17px;width:13px;height:3px;background:#D8DEE9"></i>
<i style="left:210px;top:17px;width:13px;height:3px;background:#D8DEE9"></i>
<i style="left:226px;top:17px;width:13px;height:3px;background:#D8DEE9"></i>
<i style="left:242px;top:17px;width:13px;height:3px;background:#D8DEE9"></i>
<i style="left:258px;top:17px;width:13px;height:3px;background:#D8DEE9"></i>
<i style="left:274px;top:17px;width:13px;height:3px;background:#D8DEE9"></i>
<i style="left:279px;top:12px;width:3px;height:13px;background:#D8DEE9"></i>
<i style="left:290px;top:17px;width:13px;height:3px;background:#D8DEE9"></i>
<i style="left:306px;top:17px;width:13px;height:3px;background:#D8DEE9"></i>
<i style="left:322px;top:17px;width:13px;height:3px;background:#D8DEE9"></i>
<i style="left:338px;top:17px;width:13px;height:3px;background:#D8DEE9"></i>
<i style="left:354px;top:17px;width:13px;height:3px;background:#D8DEE9"></i>
<i style="left:370px;top:17px;width:13px;height:3px;background:#D8DEE9"></i>
<i style="left:386px;top:17px;width:13px;height:3px;background:#D8DEE9"></i>
<i style="left:402px;top:17px;width:13px;height:3px;background:#D8DEE9"></i>
<i style="left:407px;top:12px;width:3px;height:13px;background:#D8DEE9"></i>
<i style="left:418px;top:17px;width:13px;height:3px;background:#D8DEE9"></i>
<i style="left:434px;top:17px;width:13px;height:3px;background:#D8DEE9"></i>
<i style="left:450px;top:17px;width:13px;height:3px;background:#D8DEE9"></i>
<i style="left:466px;top:17px;width:13px;height:3px;background:#D8DEE9"></i>
<i style="left:482px;top:17px;width:13px;height:3px;background:#D8DEE9"></i>
<i style="left:498px;top:17px;width:13px;height:3px;background:#D8DEE9"></i>
<i style="left:514px;top:17px;width:13px;height:3px;background:#D8DEE9"></i>
<i style="left:530px;top:17px;width:13px;height:3px;background:#D8DEE9"></i>
<i style="left:546px;top:17px;width:13px;height:3px;background:#D8DEE9"></i>
<i style="left:562px;top:17px;width:13px;height:3px;background:#D8DEE9"></i>
<i style="left:578px;top:17px;width:13px;height:3px;background:#D8DEE9"></i>
<i style="left:594px;top:17px;width:13px;height:3px;background:#D8DEE9"></i>
<i style="left:610px;top:17px;width:13px;height:3px;background:#D8DEE9"></i>
<i style="left:626px;top:17px;width:13px;height:3px;background:#D8DEE9"></i>
<i style="left:642px;top:17px;width:13px;height:3px;background:#D8DEE9"></i>
<i style="left:647px;top:12px;width:3px;height:13px;background:#D8DEE9"></i>
<i style="left:658px;top:17px;width:13px;height:3px;background:#D8DEE9"></i>
<i style="left:674px;top:17px;width:13px;height:3px;background:#D8DEE9"></i>
<i style="left:690px;top:17px;width:13px;height:3px;background:#D8DEE9"></i>
<i style="left:706px;top:17px;width:13px;height:3px;background:#D8DEE9"></i>
<i style="left:722px;top:17px;width:13px;height:3px;background:#D8DEE9"></i>
<i style="left:738px;top:17px;width:13px;height:3px;background:#D8DEE9"></i>
<i style="left:754px;top:17px;width:13px;height:3px;background:#D8DEE9"></i>
<i style="left:770px;top:17px;width:13px;height:3px;background:#D8DEE9"></i>
<i style="left:786px;top:17px;width:13px;height:3px;background:#D8DEE9"></i>
<i style="left:802px;top:17px;width:13px;height:3px;background:#D8DEE9"></i>
<i style="left:818px;top:17px;width:13px;height:3px;background:#D8DEE9"></i>
<i style="left:834px;top:17px;width:13px;height:3px;background:#D8DEE9"></i>
<i style="left:839px;top:12px;width:3px;height:13px;background:#D8DEE9"></i>
</div>
<div class="row" style="top:1242px">
<i style="left:498px;top:17px;width:13px;height:3px;background:#D8DEE9"></i>
<span style="left:0px;color:#D8DEE9">| 29  | nsd      | up    | 12.2 RELEASE | 10.0.0.17 |</span>
</div>
<div class="row" style="top:1283px">
<i style="left:2px;top:17px;width:13px;height:3px;background:#D8DEE9"></i>
<i style="left:7px;top:12px;width:3px;height:13px;background:#D8DEE9"></i>
<i style="left:18px;top:17px;width:13px;height:3px;background:#D8DEE9"></i>
<i style="left:34px;top:17px;width:13px;height:3px;background:#D8DEE9"></i>
<i style="left:50px;top:17px;width:13px;height:3px;background:#D8DEE9"></i>
<i style="left:66px;top:17px;width:13px;height:3px;background:#D8DEE9"></i>
<i style="left:82px;top:17px;width:13px;height:3px;background:#D8DEE9"></i>
<i style="left:98px;top:17px;width:13px;height:3px;background:#D8DEE9"></i>
<i style="left:103px;top:12px;width:3px;height:13px;background:#D8DEE9"></i>
<i style="left:114px;top:17px;width:13px;height:3px;background:#D8DEE9"></i>
<i style="left:130px;top:17px;width:13px;height:3px;background:#D8DEE9"></i>
<i style="left:146px;top:17px;width:13px;height:3px;background:#D8DEE9"></i>
<i style="left:162px;top:17px;width:13px;height:3px;background:#D8DEE9"></i>
<i style="left:178px;top:17px;width:13px;height:3px;background:#D8DEE9"></i>
<i style="left:194px;top:17px;width:13px;height:3px;background:#D8DEE9"></i>
<i style="left:210px;top:17px;width:13px;height:3px;background:#D8DEE9"></i>
<i style="left:226px;top:17px;width:13px;height:3px;background:#D8DEE9"></i>
<i style="left:242px;top:17px;width:13px;height:3px;background:#D8DEE9"></i>
<i style="left:258px;top:17px;width:13px;height:3px;background:#D8DEE9"></i>
<i style="left:274px;top:17px;width:13px;height:3px;background:#D8DEE9"></i>
<i style="left:279px;top:12px;width:3px;height:13px;background:#D8DEE9"></i>
<i style="left:290px;top:17px;width:13px;height:3px;background:#D8DEE9"></i>
<i style="left:306px;top:17px;width:13px;height:3px;background:#D8DEE9"></i>
<i style="left:322px;top:17px;width:13px;height:3px;background:#D8DEE9"></i>
<i style="left:338px;top:17px;width:13px;height:3px;background:#D8DEE9"></i>
<i style="left:354px;top:17px;width:13px;height:3px;background:#D8DEE9"></i>
<i style="left:370px;top:17px;width:13px;height:3px;background:#D8DEE9"></i>
<i style="left:386px;top:17px;width:13px;height:3px;background:#D8DEE9"></i>
<i style="left:402px;top:17px;width:13px;height:3px;background:#D8DEE9"></i>
<i style="left:407px;top:12px;width:3px;height:13px;background:#D8DEE9"></i>
<i style="left:418px;top:17px;width:13px;height:3px;background:#D8DEE9"></i>
<i style="left:434px;top:17px;width:13px;height:3px;background:#D8DEE9"></i>
<i style="left:450px;top:17px;width:13px;height:3px;background:#D8DEE9"></i>
<i style="left:466px;top:17px;width:13px;height:3px;background:#D8DEE9"></i>
<i style="left:482px;top:17px;width:13px;height:3px;background:#D8DEE9"></i>
<i style="left:498px;top:17px;width:13px;height:3px;background:#D8DEE9"></i>
<i style="left:514px;top:17px;width:13px;height:3px;background:#D8DEE9"></i>
<i style="left:530px;top:17px;width:13px;height:3px;background:#D8DEE9"></i>
<i style="left:546px;top:17px;width:13px;height:3px;background:#D8DEE9"></i>
<i style="left:562px;top:17px;width:13px;height:3px;background:#D8DEE9"></i>
<i style="left:578px;top:17px;width:13px;height:3px;background:#D8DEE9"></i>
<i style="left:594px;top:17px;width:13px;height:3px;background:#D8DEE9"></i>
<i style="left:610px;top:17px;width:13px;height:3px;background:#D8DEE9"></i>
<i style="left:626px;top:17px;width:13px;height:3px;background:#D8DEE9"></i>
<i style="left:642px;top:17px;width:13px;height:3px;background:#D8DEE9"></i>
<i style="left:647px;top:12px;width:3px;height:13px;background:#D8DEE9"></i>
<i style="left:658px;top:17px;width:13px;height:3px;background:#D8DEE9"></i>
<i style="left:674px;top:17px;width:13px;height:3px;background:#D8DEE9"></i>
<i style="left:690px;top:17px;width:13px;height:3px;background:#D8DEE9"></i>
<i style="left:706px;top:17px;width:13px;height:3px;background:#D8DEE9"></i>
<i style="left:722px;top:17px;width:13px;height:3px;background:#D8DEE9"></i>
<i style="left:738px;top:17px;width:13px;height:3px;background:#D8DEE9"></i>
<i style="left:754px;top:17px;width:13px;height:3px;background:#D8DEE9"></i>
<i style="left:770px;top:17px;width:13px;height:3px;background:#D8DEE9"></i>
<i style="left:786px;top:17px;width:13px;height:3px;background:#D8DEE9"></i>
<i style="left:802px;top:17px;width:13px;height:3px;background:#D8DEE9"></i>
<i style="left:818px;top:17px;width:13px;height:3px;background:#D8DEE9"></i>
<i style="left:834px;top:17px;width:13px;height:3px;background:#D8DEE9"></i>
<i style="left:839px;top:12px;width:3px;height:13px;background:#D8DEE9"></i>
</div>
<div class="row" style="top:1324px">
<i style="left:498px;top:17px;width:13px;height:3px;background:#D8DEE9"></i>
<span style="left:0px;color:#D8DEE9">| 27  | redis    | up    | 12.2 RELEASE | 10.0.0.12 |</span>
</div>
<div class="row" style="top:1365px">
<i style="left:2px;top:17px;width:13px;height:3px;background:#D8DEE9"></i>
<i style="left:7px;top:12px;width:3px;height:13px;background:#D8DEE9"></i>
<i style="left:18px;top:17px;width:13px;height:3px;background:#D8DEE9"></i>
<i style="left:34px;top:17px;width:13px;height:3px;background:#D8DEE9"></i>
<i style="left:50px;top:17px;width:13px;height:3px;background:#D8DEE9"></i>
<i style="left:66px;top:17px;width:13px;height:3px;background:#D8DEE9"></i>
<i style="left:82px;top:17px;width:13px;height:3px;background:#D8DEE9"></i>
<i style="left:98px;top:17px;width:13px;height:3px;background:#D8DEE9"></i>
<i style="left:103px;top:12px;width:3px;height:13px;background:#D8DEE9"></i>
<i style="left:114px;top:17px;width:13px;height:3px;background:#D8DEE9"></i>
<i style="left:130px;top:17px;width:13px;height:3px;background:#D8DEE9"></i>
<i style="left:146px;top:17px;width:13px;height:3px;background:#D8DEE9"></i>
<i style="left:162px;top:17px;width:13px;height:3px;background:#D8DEE9"></i>
<i style="left:178px;top:17px;width:13px;height:3px;background:#D8DEE9"></i>
<i style="left:194px;top:17px;width:13px;height:3px;background:#D8DEE9"></i>
<i style="left:210px;top:17px;width:13px;height:3px;background:#D8DEE9"></i>
<i style="left:226px;top:17px;width:13px;height:3px;background:#D8DEE9"></i>
<i style="left:242px;top:17px;width:13px;height:3px;background:#D8DEE9"></i>
<i style="left:258px;top:17px;width:13px;height:3px;background:#D8DEE9"></i>
<i style="left:274px;top:17px;width:13px;height:3px;background:#D8DEE9"></i>
<i style="left:279px;top:12px;width:3px;height:13px;background:#D8DEE9"></i>
<i style="left:290px;top:17px;width:13px;height:3px;background:#D8DEE9"></i>
<i style="left:306px;top:17px;width:13px;height:3px;background:#D8DEE9"></i>
<i style="left:322px;top:17px;width:13px;height:3px;background:#D8DEE9"></i>
<i style="left:338px;top:17px;width:13px;height:3px;background:#D8DEE9"></i>
<i style="left:354px;top:17px;width:13px;height:3px;background:#D8DEE9"></i>
<i style="left:370px;top:17px;width:13px;height:3px;background:#D8DEE9"></i>
<i style="left:386px;top:17px;width:13px;height:3px;background:#D8DEE9"></i>
<i style="left:402px;top:17px;width:13px;height:3px;background:#D8DEE9"></i>
<i style="left:407px;top:12px;width:3px;height:13px;background:#D8DEE9"></i>
<i style="left:418px;top:17px;width:13px;height:3px;background:#D8DEE9"></i>
<i style="left:434px;top:17px;width:13px;height:3px;background:#D8DEE9"></i>
<i style="left:450px;top:17px;width:13px;height:3px;background:#D8DEE9"></i>
<i style="left:466px;top:17px;width:13px;height:3px;background:#D8DEE9"></i>
<i style="left:482px;top:17px;width:13px;height:3px;background:#D8DEE9"></i>
<i style="left:498px;top:17px;width:13px;height:3px;background:#D8DEE9"></i>
<i style="left:514px;top:17px;width:13px;height:3px;background:#D8DEE9"></i>
<i style="left:530px;top:17px;width:13px;height:3px;background:#D8DEE9"></i>
<i style="left:546px;top:17px;width:13px;height:3px;background:#D8DEE9"></i>
<i style="left:562px;top:17px;width:13px;height:3px;background:#D8DEE9"></i>
<i style="left:578px;top:17px;width:13px;height:3px;background:#D8DEE9"></i>
<i style="left:594px;top:17px;width:13px;height:3px;background:#D8DEE9"></i>
<i style="left:610px;top:17px;width:13px;height:3px;background:#D8DEE9"></i>
<i style="left:626px;top:17px;width:13px;height:3px;background:#D8DEE9"></i>
<i style="left:642px;top:17px;width:13px;height:3px;background:#D8DEE9"></i>
<i style="left:647px;top:12px;width:3px;height:13px;background:#D8DEE9"></i>
<i style="left:658px;top:17px;width:13px;height:3px;background:#D8DEE9"></i>
<i style="left:674px;top:17px;width:13px;height:3px;background:#D8DEE9"></i>
<i style="left:690px;top:17px;width:13px;height:3px;background:#D8DEE9"></i>
<i style="left:706px;top:17px;width:13px;height:3px;background:#D8DEE9"></i>
<i style="left:722px;top:17px;width:13px;height:3px;background:#D8DEE9"></i>
<i style="left:738px;top:17px;width:13px;height:3px;background:#D8DEE9"></i>
<i style="left:754px;top:17px;width:13px;height:3px;background:#D8DEE9"></i>
<i style="left:770px;top:17px;width:13px;height:3px;background:#D8DEE9"></i>
<i style="left:786px;top:17px;width:13px;height:3px;background:#D8DEE9"></i>
<i style="left:802px;top:17px;width:13px;height:3px;background:#D8DEE9"></i>
<i style="left:818px;top:17px;width:13px;height:3px;background:#D8DEE9"></i>
<i style="left:834px;top:17px;width:13px;height:3px;background:#D8DEE9"></i>
<i style="left:839px;top:12px;width:3px;height:13px;background:#D8DEE9"></i>
</div>
<div class="row" style="top:1406px">
<i style="left:498px;top:17px;width:13px;height:3px;background:#D8DEE9"></i>
<span style="left:0px;color:#D8DEE9">| 28  | sql      | up    | 12.2 RELEASE | 10.0.0.10 |</span>
</div>
<div class="row" style="top:1447px">
<i style="left:2px;top:17px;width:13px;height:3px;background:#D8DEE9"></i>
<i style="left:7px;top:12px;width:3px;height:13px;background:#D8DEE9"></i>
<i style="left:18px;top:17px;width:13px;height:3px;background:#D8DEE9"></i>
<i style="left:34px;top:17px;width:13px;height:3px;background:#D8DEE9"></i>
<i style="left:50px;top:17px;width:13px;height:3px;background:#D8DEE9"></i>
<i style="left:66px;top:17px;width:13px;height:3px;background:#D8DEE9"></i>
<i style="left:82px;top:17px;width:13px;height:3px;background:#D8DEE9"></i>
<i style="left:98px;top:17px;width:13px;height:3px;background:#D8DEE9"></i>
<i style="left:103px;top:12px;width:3px;height:13px;background:#D8DEE9"></i>
<i style="left:114px;top:17px;width:13px;height:3px;background:#D8DEE9"></i>
<i style="left:130px;top:17px;width:13px;height:3px;background:#D8DEE9"></i>
<i style="left:146px;top:17px;width:13px;height:3px;background:#D8DEE9"></i>
<i style="left:162px;top:17px;width:13px;height:3px;background:#D8DEE9"></i>
<i style="left:178px;top:17px;width:13px;height:3px;background:#D8DEE9"></i>
<i style="left:194px;top:17px;width:13px;height:3px;background:#D8DEE9"></i>
<i style="left:210px;top:17px;width:13px;height:3px;background:#D8DEE9"></i>
<i style="left:226px;top:17px;width:13px;height:3px;background:#D8DEE9"></i>
<i style="left:242px;top:17px;width:13px;height:3px;background:#D8DEE9"></i>
<i style="left:258px;top:17px;width:13px;height:3px;background:#D8DEE9"></i>
<i style="left:274px;top:17px;width:13px;height:3px;background:#D8DEE9"></i>
<i style="left:279px;top:12px;width:3px;height:13px;background:#D8DEE9"></i>
<i style="left:290px;top:17px;width:13px;height:3px;background:#D8DEE9"></i>
<i style="left:306px;top:17px;width:13px;height:3px;background:#D8DEE9"></i>
<i style="left:322px;top:17px;width:13px;height:3px;background:#D8DEE9"></i>
<i style="left:338px;top:17px;width:13px;height:3px;background:#D8DEE9"></i>
<i style="left:354px;top:17px;width:13px;height:3px;background:#D8DEE9"></i>
<i style="left:370px;top:17px;width:13px;height:3px;background:#D8DEE9"></i>
<i style="left:386px;top:17px;width:13px;height:3px;background:#D8DEE9"></i>
<i style="left:402px;top:17px;width:13px;height:3px;background:#D8DEE9"></i>
<i style="left:407px;top:12px;width:3px;height:13px;background:#D8DEE9"></i>
<i style="left:418px;top:17px;width:13px;height:3px;background:#D8DEE9"></i>
<i style="left:434px;top:17px;width:13px;height:3px;background:#D8DEE9"></i>
<i style="left:450px;top:17px;width:13px;height:3px;background:#D8DEE9"></i>
<i style="left:466px;top:17px;width:13px;height:3px;background:#D8DEE9"></i>
<i style="left:482px;top:17px;width:13px;height:3px;background:#D8DEE9"></i>
<i style="left:498px;top:17px;width:13px;height:3px;background:#D8DEE9"></i>
<i style="left:514px;top:17px;width:13px;height:3px;background:#D8DEE9"></i>
<i style="left:530px;top:17px;width:13px;height:3px;background:#D8DEE9"></i>
<i style="left:546px;top:17px;width:13px;height:3px;background:#D8DEE9"></i>
<i style="left:562px;top:17px;width:13px;height:3px;background:#D8DEE9"></i>
<i style="left:578px;top:17px;width:13px;height:3px;background:#D8DEE9"></i>
<i style="left:594px;top:17px;width:13px;height:3px;background:#D8DEE9"></i>
<i style="left:610px;top:17px;width:13px;height:3px;background:#D8DEE9"></i>
<i style="left:626px;top:17px;width:13px;height:3px;background:#D8DEE9"></i>
<i style="left:642px;top:17px;width:13px;height:3px;background:#D8DEE9"></i>
<i style="left:647px;top:12px;width:3px;height:13px;background:#D8DEE9"></i>
<i style="left:658px;top:17px;width:13px;height:3px;background:#D8DEE9"></i>
<i style="left:674px;top:17px;width:13px;height:3px;background:#D8DEE9"></i>
<i style="left:690px;top:17px;width:13px;height:3px;background:#D8DEE9"></i>
<i style="left:706px;top:17px;width:13px;height:3px;background:#D8DEE9"></i>
<i style="left:722px;top:17px;width:13px;height:3px;background:#D8DEE9"></i>
<i style="left:738px;top:17px;width:13px;height:3px;background:#D8DEE9"></i>
<i style="left:754px;top:17px;width:13px;height:3px;background:#D8DEE9"></i>
<i style="left:770px;top:17px;width:13px;height:3px;background:#D8DEE9"></i>
<i style="left:786px;top:17px;width:13px;height:3px;background:#D8DEE9"></i>
<i style="left:802px;top:17px;width:13px;height:3px;background:#D8DEE9"></i>
<i style="left:818px;top:17px;width:13px;height:3px;background:#D8DEE9"></i>
<i style="left:834px;top:17px;width:13px;height:3px;background:#D8DEE9"></i>
<i style="left:839px;top:12px;width:3px;height:13px;background:#D8DEE9"></i>
</div>
<div class="row" style="top:1488px">
<i style="left:498px;top:17px;width:13px;height:3px;background:#D8DEE9"></i>
<span style="left:0px;color:#D8DEE9">| 23  | unifi    | up    | 12.2 RELEASE | 10.0.0.19 |</span>
</div>
<div class="row" style="top:1529px">
<i style="left:2px;top:17px;width:13px;height:3px;background:#D8DEE9"></i>
<i style="left:7px;top:12px;width:3px;height:13px;background:#D8DEE9"></i>
<i style="left:18px;top:17px;width:13px;height:3px;background:#D8DEE9"></i>
<i style="left:34px;top:17px;width:13px;height:3px;background:#D8DEE9"></i>
<i style="left:50px;top:17px;width:13px;height:3px;background:#D8DEE9"></i>
<i style="left:66px;top:17px;width:13px;height:3px;background:#D8DEE9"></i>
<i style="left:82px;top:17px;width:13px;height:3px;background:#D8DEE9"></i>
<i style="left:98px;top:17px;width:13px;height:3px;background:#D8DEE9"></i>
<i style="left:103px;top:12px;width:3px;height:13px;background:#D8DEE9"></i>
<i style="left:114px;top:17px;width:13px;height:3px;background:#D8DEE9"></i>
<i style="left:130px;top:17px;width:13px;height:3px;background:#D8DEE9"></i>
<i style="left:146px;top:17px;width:13px;height:3px;background:#D8DEE9"></i>
<i style="left:162px;top:17px;width:13px;height:3px;background:#D8DEE9"></i>
<i style="left:178px;top:17px;width:13px;height:3px;background:#D8DEE9"></i>
<i style="left:194px;top:17px;width:13px;height:3px;background:#D8DEE9"></i>
<i style="left:210px;top:17px;width:13px;height:3px;background:#D8DEE9"></i>
<i style="left:226px;top:17px;width:13px;height:3px;background:#D8DEE9"></i>
<i style="left:242px;top:17px;width:13px;height:3px;background:#D8DEE9"></i>
<i style="left:258px;top:17px;width:13px;height:3px;background:#D8DEE9"></i>
<i style="left:274px;top:17px;width:13px;height:3px;background:#D8DEE9"></i>
<i style="left:279px;top:12px;width:3px;height:13px;background:#D8DEE9"></i>
<i style="left:290px;top:17px;width:13px;height:3px;background:#D8DEE9"></i>
<i style="left:306px;top:17px;width:13px;height:3px;background:#D8DEE9"></i>
<i style="left:322px;top:17px;width:13px;height:3px;background:#D8DEE9"></i>
<i style="left:338px;top:17px;width:13px;height:3px;background:#D8DEE9"></i>
<i style="left:354px;top:17px;width:13px;height:3px;background:#D8DEE9"></i>
<i style="left:370px;top:17px;width:13px;height:3px;background:#D8DEE9"></i>
<i style="left:386px;top:17px;width:13px;height:3px;background:#D8DEE9"></i>
<i style="left:402px;top:17px;width:13px;height:3px;background:#D8DEE9"></i>
<i style="left:407px;top:12px;width:3px;height:13px;background:#D8DEE9"></i>
<i style="left:418px;top:17px;width:13px;height:3px;background:#D8DEE9"></i>
<i style="left:434px;top:17px;width:13px;height:3px;background:#D8DEE9"></i>
<i style="left:450px;top:17px;width:13px;height:3px;background:#D8DEE9"></i>
<i style="left:466px;top:17px;width:13px;height:3px;background:#D8DEE9"></i>
<i style="left:482px;top:17px;width:13px;height:3px;background:#D8DEE9"></i>
<i style="left:498px;top:17px;width:13px;height:3px;background:#D8DEE9"></i>
<i style="left:514px;top:17px;width:13px;height:3px;background:#D8DEE9"></i>
<i style="left:530px;top:17px;width:13px;height:3px;background:#D8DEE9"></i>
<i style="left:546px;top:17px;width:13px;height:3px;background:#D8DEE9"></i>
<i style="left:562px;top:17px;width:13px;height:3px;background:#D8DEE9"></i>
<i style="left:578px;top:17px;width:13px;height:3px;background:#D8DEE9"></i>
<i style="left:594px;top:17px;width:13px;height:3px;background:#D8DEE9"></i>
<i style="left:610px;top:17px;width:13px;height:3px;background:#D8DEE9"></i>
<i style="left:626px;top:17px;width:13px;height:3px;background:#D8DEE9"></i>
<i style="left:642px;top:17px;width:13px;height:3px;background:#D8DEE9"></i>
<i style="left:647px;top:12px;width:3px;height:13px;background:#D8DEE9"></i>
<i style="left:658px;top:17px;width:13px;height:3px;background:#D8DEE9"></i>
<i style="left:674px;top:17px;width:13px;height:3px;background:#D8DEE9"></i>
<i style="left:690px;top:17px;width:13px;height:3px;background:#D8DEE9"></i>
<i style="left:706px;top:17px;width:13px;height:3px;background:#D8DEE9"></i>
<i style="left:722px;top:17px;width:13px;height:3px;background:#D8DEE9"></i>
<i style="left:738px;top:17px;width:13px;height:3px;background:#D8DEE9"></i>
<i style="left:754px;top:17px;width:13px;height:3px;background:#D8DEE9"></i>
<i style="left:770px;top:17px;width:13px;height:3px;background:#D8DEE9"></i>
<i style="left:786px;top:17px;width:13px;height:3px;background:#D8DEE9"></i>
<i style="left:802px;top:17px;width:13px;height:3px;background:#D8DEE9"></i>
<i style="left:818px;top:17px;width:13px;height:3px;background:#D8DEE9"></i>
<i style="left:834px;top:17px;width:13px;height:3px;background:#D8DEE9"></i>
<i style="left:839px;top:12px;width:3px;height:13px;background:#D8DEE9"></i>
</div>
<div class="row" style="top:1570px">
<i style="left:498px;top:17px;width:13px;height:3px;background:#D8DEE9"></i>
<span style="left:0px;color:#D8DEE9">| 24  | www      | up    | 12.2 RELEASE | 10.0.0.14 |</span>
</div>
<div class="row" style="top:1611px">
<i style="left:2px;top:17px;width:13px;height:3px;background:#D8DEE9"></i>
<i style="left:7px;top:12px;width:3px;height:13px;background:#D8DEE9"></i>
<i style="left:18px;top:17px;width:13px;height:3px;background:#D8DEE9"></i>
<i style="left:34px;top:17px;width:13px;height:3px;background:#D8DEE9"></i>
<i style="left:50px;top:17px;width:13px;height:3px;background:#D8DEE9"></i>
<i style="left:66px;top:17px;width:13px;height:3px;background:#D8DEE9"></i>
<i style="left:82px;top:17px;width:13px;height:3px;background:#D8DEE9"></i>
<i style="left:98px;top:17px;width:13px;height:3px;background:#D8DEE9"></i>
<i style="left:103px;top:12px;width:3px;height:13px;background:#D8DEE9"></i>
<i style="left:114px;top:17px;width:13px;height:3px;background:#D8DEE9"></i>
<i style="left:130px;top:17px;width:13px;height:3px;background:#D8DEE9"></i>
<i style="left:146px;top:17px;width:13px;height:3px;background:#D8DEE9"></i>
<i style="left:162px;top:17px;width:13px;height:3px;background:#D8DEE9"></i>
<i style="left:178px;top:17px;width:13px;height:3px;background:#D8DEE9"></i>
<i style="left:194px;top:17px;width:13px;height:3px;background:#D8DEE9"></i>
<i style="left:210px;top:17px;width:13px;height:3px;background:#D8DEE9"></i>
<i style="left:226px;top:17px;width:13px;height:3px;background:#D8DEE9"></i>
<i style="left:242px;top:17px;width:13px;height:3px;background:#D8DEE9"></i>
<i style="left:258px;top:17px;width:13px;height:3px;background:#D8DEE9"></i>
<i style="left:274px;top:17px;width:13px;height:3px;background:#D8DEE9"></i>
<i style="left:279px;top:12px;width:3px;height:13px;background:#D8DEE9"></i>
<i style="left:290px;top:17px;width:13px;height:3px;background:#D8DEE9"></i>
<i style="left:306px;top:17px;width:13px;height:3px;background:#D8DEE9"></i>
<i style="left:322px;top:17px;width:13px;height:3px;background:#D8DEE9"></i>
<i style="left:338px;top:17px;width:13px;height:3px;background:#D8DEE9"></i>
<i style="left:354px;top:17px;width:13px;height:3px;background:#D8DEE9"></i>
<i style="left:370px;top:17px;width:13px;height:3px;background:#D8DEE9"></i>
<i style="left:386px;top:17px;width:13px;height:3px;background:#D8DEE9"></i>
<i style="left:402px;top:17px;width:13px;height:3px;background:#D8DEE9"></i>
<i style="left:407px;top:12px;width:3px;height:13px;background:#D8DEE9"></i>
<i style="left:418px;top:17px;width:13px;height:3px;background:#D8DEE9"></i>
<i style="left:434px;top:17px;width:13px;height:3px;background:#D8DEE9"></i>
<i style="left:450px;top:17px;width:13px;height:3px;background:#D8DEE9"></i>
<i style="left:466px;top:17px;width:13px;height:3px;background:#D8DEE9"></i>
<i style="left:482px;top:17px;width:13px;height:3px;background:#D8DEE9"></i>
<i style="left:498px;top:17px;width:13px;height:3px;background:#D8DEE9"></i>
<i style="left:514px;top:17px;width:13px;height:3px;background:#D8DEE9"></i>
<i style="left:530px;top:17px;width:13px;height:3px;background:#D8DEE9"></i>
<i style="left:546px;top:17px;width:13px;height:3px;background:#D8DEE9"></i>
<i style="left:562px;top:17px;width:13px;height:3px;background:#D8DEE9"></i>
<i style="left:578px;top:17px;width:13px;height:3px;background:#D8DEE9"></i>
<i style="left:594px;top:17px;width:13px;height:3px;background:#D8DEE9"></i>
<i style="left:610px;top:17px;width:13px;height:3px;background:#D8DEE9"></i>
<i style="left:626px;top:17px;width:13px;height:3px;background:#D8DEE9"></i>
<i style="left:642px;top:17px;width:13px;height:3px;background:#D8DEE9"></i>
<i style="left:647px;top:12px;width:3px;height:13px;background:#D8DEE9"></i>
<i style="left:658px;top:17px;width:13px;height:3px;background:#D8DEE9"></i>
<i style="left:674px;top:17px;width:13px;height:3px;background:#D8DEE9"></i>
<i style="left:690px;top:17px;width:13px;height:3px;background:#D8DEE9"></i>
<i style="left:706px;top:17px;width:13px;height:3px;background:#D8DEE9"></i>
<i style="left:722px;top:17px;width:13px;height:3px;background:#D8DEE9"></i>
<i style="left:738px;top:17px;width:13px;height:3px;background:#D8DEE9"></i>
<i style="left:754px;top:17px;width:13px;height:3px;background:#D8DEE9"></i>
<i style="left:770px;top:17px;width:13px;height:3px;background:#D8DEE9"></i>
<i style="left:786px;top:17px;width:13px;height:3px;background:#D8DEE9"></i>
<i style="left:802px;top:17px;width:13px;height:3px;background:#D8DEE9"></i>
<i style="left:818px;top:17px;width:13px;height:3px;background:#D8DEE9"></i>
<i style="left:834px;top:17px;width:13px;height:3px;background:#D8DEE9"></i>
<i style="left:839px;top:12px;width:3px;height:13px;background:#D8DEE9"></i>
</div>
<div class="row" style="top:1652px">
<span style="left:0px;color:#BF616A;font-weight:bold;-webkit-text-stroke:0">root#</span>
<span style="left:80px;color:#81A1C1">rose</span>
<span style="left:160px;top:-3px;width:32px;height:41px"><svg width="32" height="41" style="position:absolute;top:0;left:0" viewBox="0 0 32 41"><g fill="#A3BE8C"><rect x="7" y="15" width="3" height="3"/><rect x="7" y="20" width="3" height="3"/><rect x="7" y="24" width="3" height="5"/><rect x="23" y="17" width="3" height="5"/><rect x="23" y="24" width="3" height="3"/><rect x="23" y="28" width="3" height="3"/></g><g stroke="#A3BE8C" stroke-width="3" fill="none" stroke-linecap="round" stroke-linejoin="round"><path d="M4.5 25.5 L8.5 29.5 L12.5 25.5"/><path d="M20.5 19.5 L24.5 15.5 L28.5 19.5"/></g></svg></span>
<span style="left:208px;color:#EBCB8B">/usr/home/chris</span>
<span style="left:464px;top:-3px;width:16px;height:41px"><svg width="16" height="41" style="position:absolute;top:0;left:0" viewBox="0 0 16 41"><path d="M3.6 8.6 L9.2 20.6 L3.6 32.6" stroke="#ECEFF4" stroke-width="2.8" fill="none" stroke-linecap="round" stroke-linejoin="miter"/></svg></span>
</div>
<div class="row" style="top:1693px">
<span style="left:0px;color:#4C566A;font-weight:bold;-webkit-text-stroke:0"> main </span>
<svg style="position:absolute;left:224px;top:-3px" width="16" height="41" viewBox="0 0 16 41"><path d="M8.5 21.5 V15.5 M8.5 21.5 L2.9 19.7 M8.5 21.5 L14.1 19.7 M8.5 21.5 L5 26.6 M8.5 21.5 L12 26.6" stroke="#ECEFF4" stroke-width="2.3" stroke-linecap="round" fill="none"/></svg>
<span style="left:112px;color:#ECEFF4"> 0 zsh   </span>
<i style="left:418px;top:17px;width:13px;height:3px;background:#ECEFF4"></i>
<span style="left:272px;color:#ECEFF4"> 1 zpool   </span>
<span style="left:2528px;color:#ECEFF4;font-weight:bold;-webkit-text-stroke:0"> rose </span>
</div>
<div class="row" style="top:1734px">
<span style="left:0px;color:#4C566A;font-weight:bold;-webkit-text-stroke:0"> TMIX </span>
<span style="left:112px;color:#ECEFF4"> 1 zsh  </span>
<span style="left:256px;color:#ECEFF4"> 2 donna  </span>
<svg style="position:absolute;left:560px;top:-3px" width="16" height="41" viewBox="0 0 16 41"><path d="M8.5 21.5 V15.5 M8.5 21.5 L2.9 19.7 M8.5 21.5 L14.1 19.7 M8.5 21.5 L5 26.6 M8.5 21.5 L12 26.6" stroke="#3B4252" stroke-width="2.3" stroke-linecap="round" fill="none"/></svg>
<span style="left:432px;color:#3B4252"> 3 rose   </span>
<span style="left:608px;color:#ECEFF4"> 4 amy  </span>
<i style="left:882px;top:17px;width:13px;height:3px;background:#ECEFF4"></i>
<span style="left:752px;color:#ECEFF4"> 5 rory   </span>
<i style="left:2242px;top:17px;width:13px;height:3px;background:#ECEFF4"></i>
<i style="left:2290px;top:17px;width:13px;height:3px;background:#ECEFF4"></i>
<span style="left:2160px;color:#ECEFF4"> 2021 01 24 | 18:56 </span>
<span style="left:2480px;color:#4C566A;font-weight:bold;-webkit-text-stroke:0"> mayence </span>
</div>
</div></body></html>
